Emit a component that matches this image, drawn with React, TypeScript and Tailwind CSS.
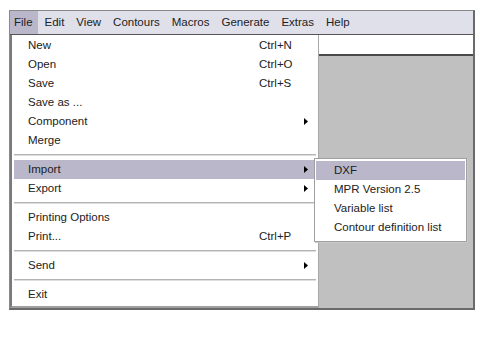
import React from 'react';

type Item =
  | { kind: 'item'; label: string; shortcut?: string; sub?: boolean; active?: boolean }
  | { kind: 'sep' };

const menuBar = ['File', 'Edit', 'View', 'Contours', 'Macros', 'Generate', 'Extras', 'Help'];

const fileMenu: Item[] = [
  { kind: 'item', label: 'New', shortcut: 'Ctrl+N' },
  { kind: 'item', label: 'Open', shortcut: 'Ctrl+O' },
  { kind: 'item', label: 'Save', shortcut: 'Ctrl+S' },
  { kind: 'item', label: 'Save as ...' },
  { kind: 'item', label: 'Component', sub: true },
  { kind: 'item', label: 'Merge' },
  { kind: 'sep' },
  { kind: 'item', label: 'Import', sub: true, active: true },
  { kind: 'item', label: 'Export', sub: true },
  { kind: 'sep' },
  { kind: 'item', label: 'Printing Options' },
  { kind: 'item', label: 'Print...', shortcut: 'Ctrl+P' },
  { kind: 'sep' },
  { kind: 'item', label: 'Send', sub: true },
  { kind: 'sep' },
  { kind: 'item', label: 'Exit' },
];

const importMenu = ['DXF', 'MPR Version 2.5', 'Variable list', 'Contour definition list'];

const Arrow = () => (
  <svg width="4" height="7" viewBox="0 0 4 7" className="block">
    <path d="M0 0 L4 3.5 L0 7 Z" fill="#000" />
  </svg>
);

const App: React.FC = () => {
  return (
    <div
      className="w-[485px] h-[341px] bg-white pl-[9px] pt-[10px] text-[11.5px] text-[#222]"
      style={{ fontFamily: '"Liberation Sans", Arial, sans-serif' }}
    >
      <div className="w-[466px] h-[300px] flex flex-col border-t border-l border-[#8a8a8a] border-r-2 border-r-[#6a6a6a] border-b-2 border-b-[#6a6a6a]">
        {/* menu bar */}
        <div className="h-[24px] flex items-center bg-[#dfe0ea] border-b border-[#555]">
          {menuBar.map((m, i) => (
            <div
              key={m}
              className={`h-full flex items-center ${i === 0 ? 'bg-[#b9b7c9] pl-[4px] pr-[5px]' : 'px-[6px]'} ${i === 1 ? 'pl-[7px]' : ''}`}
            >
              {m}
            </div>
          ))}
        </div>

        {/* workspace */}
        <div className="relative flex-1 flex flex-col">
          <div className="h-[21px] bg-white border-b-2 border-[#4a4a4a]" />
          <div className="flex-1 bg-[#c0c0c0]" />

          {/* File menu */}
          <div className="absolute left-0 top-0 w-[309px] h-[273px] bg-white border-l-2 border-l-[#7a7a7a] border-r border-r-[#a8a8a8] border-b-2 border-b-[#a0a0a0] pt-[1px] px-[2px]">
            {fileMenu.map((it, i) =>
              it.kind === 'sep' ? (
                <div key={i} className="h-[10px] pt-[4px]">
                  <div className="h-[2px] bg-[#b4b4b4] border-b border-[#dedede]" />
                </div>
              ) : (
                <div
                  key={i}
                  className={`h-[19px] flex items-center pl-[14px] pr-[8px] ${it.active ? 'bg-[#b9b7c9]' : ''}`}
                >
                  <span className="flex-1">{it.label}</span>
                  {it.shortcut && <span className="w-[49px]">{it.shortcut}</span>}
                  {it.sub && <Arrow />}
                </div>
              )
            )}
          </div>

          {/* Import submenu */}
          <div className="absolute left-[304px] top-[123px] w-[153px] h-[84px] bg-white border border-[#a0a0a0] shadow-[1px_1px_0_#c8c8c8] pt-[2px] px-[1px]">
            {importMenu.map((s, i) => (
              <div
                key={s}
                className={`h-[19px] flex items-center pl-[18px] ${i === 0 ? 'bg-[#b9b7c9]' : ''}`}
              >
                {s}
              </div>
            ))}
          </div>
        </div>
      </div>
    </div>
  );
};

export default App;
